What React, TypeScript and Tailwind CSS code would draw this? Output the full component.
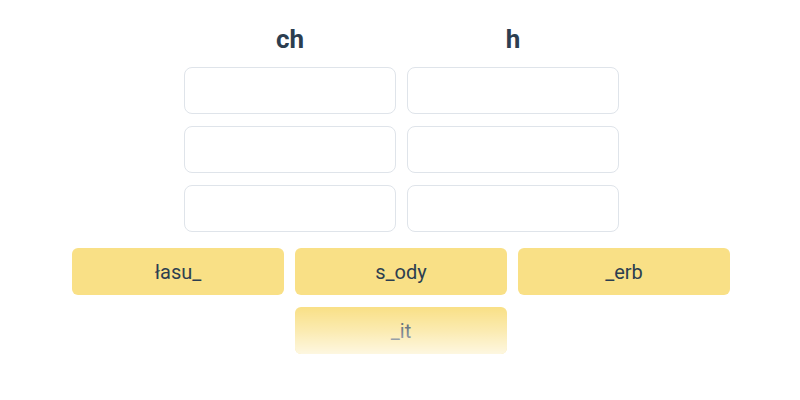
const headers = ["ch", "h"];
const slots = [0, 1, 2];
const words = ["łasu_", "s_ody", "_erb"];

function Tile({ label, faded }: { label: string; faded?: boolean }) {
  return (
    <div className="relative h-[47px] w-[212px] overflow-hidden rounded-[6px] bg-[#f9e086] flex items-center justify-center text-[20px] text-[#2c3e50]">
      <span>{label}</span>
      {faded && (
        <div className="absolute inset-0 bg-gradient-to-b from-white/0 via-white/35 to-white/75" />
      )}
    </div>
  );
}

export default function App() {
  return (
    <div
      className="w-[800px] h-[400px] bg-white pt-[23px]"
      style={{ fontFamily: "Roboto, 'Noto Sans', sans-serif" }}
    >
      <div className="ml-[184px] grid grid-cols-[212px_212px] gap-x-[11px]">
        {headers.map((h) => (
          <div
            key={h}
            className="text-center text-[26px] font-bold leading-[32px] text-[#2c3e50]"
          >
            {h}
          </div>
        ))}
      </div>

      <div className="mt-[12px] ml-[184px] grid grid-cols-[212px_212px] gap-x-[11px] gap-y-[12px]">
        {slots.map((r) =>
          headers.map((h) => (
            <div
              key={`${h}-${r}`}
              className="h-[47px] rounded-[8px] border border-[#dfe4ea] bg-white"
            />
          ))
        )}
      </div>

      <div className="mt-[16px] ml-[72px] grid grid-cols-[212px_212px_212px] gap-x-[11px] gap-y-[12px]">
        {words.map((w) => (
          <Tile key={w} label={w} />
        ))}
        <div />
        <Tile label="_it" faded />
      </div>
    </div>
  );
}
